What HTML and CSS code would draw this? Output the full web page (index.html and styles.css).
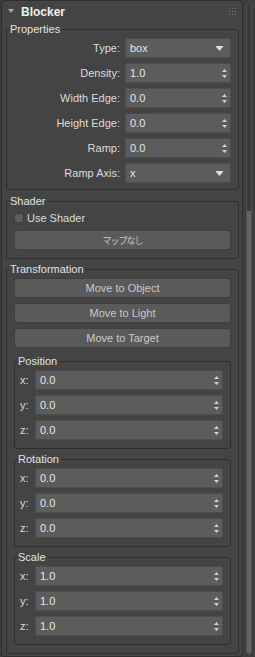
FILE: index.html
```html
<!DOCTYPE html>
<html lang="ja">
<head>
  <meta charset="UTF-8">
  <title>Blocker</title>
  <link rel="stylesheet" href="styles.css">
</head>
<body>
  <div class="wrap">
    <div class="rollout">
      <div class="rollout-head">
        <svg class="caret" width="6" height="4" viewBox="0 0 6 4"><polygon points="0,0 6,0 3,4" fill="#a8a8a8"/></svg>
        <span class="title">Blocker</span>
        <svg class="grip" width="7" height="7" viewBox="0 0 7 7" fill="#7a7a7a">
          <rect x="0" y="0" width="1" height="1"/><rect x="3" y="0" width="1" height="1"/><rect x="6" y="0" width="1" height="1"/>
          <rect x="0" y="3" width="1" height="1"/><rect x="3" y="3" width="1" height="1"/><rect x="6" y="3" width="1" height="1"/>
          <rect x="0" y="6" width="1" height="1"/><rect x="3" y="6" width="1" height="1"/><rect x="6" y="6" width="1" height="1"/>
        </svg>
      </div>

      <fieldset class="group">
        <legend>Properties</legend>
        <div class="props">
          <label>Type:</label>
          <div class="field">box<svg class="drop" width="7" height="5" viewBox="0 0 7 5"><polygon points="0,0 7,0 7,1 3.5,5 0,1" fill="#dcdcdc"/></svg></div>
          <label>Density:</label>
          <div class="field">1.0<svg class="spin" width="5" height="9" viewBox="0 0 5 9"><polygon points="2.5,0 5,3 0,3" /><polygon points="0,6 5,6 2.5,9" /></svg></div>
          <label>Width Edge:</label>
          <div class="field">0.0<svg class="spin" width="5" height="9" viewBox="0 0 5 9"><polygon points="2.5,0 5,3 0,3" /><polygon points="0,6 5,6 2.5,9" /></svg></div>
          <label>Height Edge:</label>
          <div class="field">0.0<svg class="spin" width="5" height="9" viewBox="0 0 5 9"><polygon points="2.5,0 5,3 0,3" /><polygon points="0,6 5,6 2.5,9" /></svg></div>
          <label>Ramp:</label>
          <div class="field">0.0<svg class="spin" width="5" height="9" viewBox="0 0 5 9"><polygon points="2.5,0 5,3 0,3" /><polygon points="0,6 5,6 2.5,9" /></svg></div>
          <label>Ramp Axis:</label>
          <div class="field">x<svg class="drop" width="7" height="5" viewBox="0 0 7 5"><polygon points="0,0 7,0 7,1 3.5,5 0,1" fill="#dcdcdc"/></svg></div>
        </div>
      </fieldset>

      <fieldset class="group shader">
        <legend>Shader</legend>
        <div class="stack">
          <label class="check-row"><input type="checkbox" class="check"> Use Shader</label>
          <button class="btn jp">マップなし</button>
        </div>
      </fieldset>

      <fieldset class="group trans">
        <legend>Transformation</legend>
        <div class="stack">
          <button class="btn">Move to Object</button>
          <button class="btn">Move to Light</button>
          <button class="btn">Move to Target</button>

          <fieldset class="group sub first">
            <legend>Position</legend>
            <div class="xyz">
              <label>x:</label>
              <div class="field">0.0<svg class="spin" width="5" height="9" viewBox="0 0 5 9"><polygon points="2.5,0 5,3 0,3" /><polygon points="0,6 5,6 2.5,9" /></svg></div>
              <label>y:</label>
              <div class="field">0.0<svg class="spin" width="5" height="9" viewBox="0 0 5 9"><polygon points="2.5,0 5,3 0,3" /><polygon points="0,6 5,6 2.5,9" /></svg></div>
              <label>z:</label>
              <div class="field">0.0<svg class="spin" width="5" height="9" viewBox="0 0 5 9"><polygon points="2.5,0 5,3 0,3" /><polygon points="0,6 5,6 2.5,9" /></svg></div>
            </div>
          </fieldset>

          <fieldset class="group sub">
            <legend>Rotation</legend>
            <div class="xyz">
              <label>x:</label>
              <div class="field">0.0<svg class="spin" width="5" height="9" viewBox="0 0 5 9"><polygon points="2.5,0 5,3 0,3" /><polygon points="0,6 5,6 2.5,9" /></svg></div>
              <label>y:</label>
              <div class="field">0.0<svg class="spin" width="5" height="9" viewBox="0 0 5 9"><polygon points="2.5,0 5,3 0,3" /><polygon points="0,6 5,6 2.5,9" /></svg></div>
              <label>z:</label>
              <div class="field">0.0<svg class="spin" width="5" height="9" viewBox="0 0 5 9"><polygon points="2.5,0 5,3 0,3" /><polygon points="0,6 5,6 2.5,9" /></svg></div>
            </div>
          </fieldset>

          <fieldset class="group sub">
            <legend>Scale</legend>
            <div class="xyz">
              <label>x:</label>
              <div class="field">1.0<svg class="spin" width="5" height="9" viewBox="0 0 5 9"><polygon points="2.5,0 5,3 0,3" /><polygon points="0,6 5,6 2.5,9" /></svg></div>
              <label>y:</label>
              <div class="field">1.0<svg class="spin" width="5" height="9" viewBox="0 0 5 9"><polygon points="2.5,0 5,3 0,3" /><polygon points="0,6 5,6 2.5,9" /></svg></div>
              <label>z:</label>
              <div class="field">1.0<svg class="spin" width="5" height="9" viewBox="0 0 5 9"><polygon points="2.5,0 5,3 0,3" /><polygon points="0,6 5,6 2.5,9" /></svg></div>
            </div>
          </fieldset>
        </div>
      </fieldset>
    </div>

    <div class="scrollbar">
      <div class="thumb"></div>
    </div>
  </div>
</body>
</html>
```

FILE: styles.css
```css
body {
  margin: 0;
  background: #3e3e3e;
  font-family: "Liberation Sans", Arial, sans-serif;
  font-size: 11px;
  color: #dcdcdc;
}

.wrap {
  display: flex;
  height: 657px;
  padding-left: 1px;
}

.rollout {
  width: 242px;
  box-sizing: border-box;
  background: #444;
  border: 1px solid #2f2f2f;
  border-radius: 3px;
  padding: 0 3px 5px 4px;
  height: 657px;
}

.rollout-head {
  display: flex;
  align-items: center;
  height: 21px;
}

.caret {
  margin-left: 2px;
  margin-right: 7px;
  margin-top: -1px;
}

.title {
  font-weight: bold;
  font-size: 12px;
  color: #f0f0f0;
}

.grip {
  margin-left: auto;
  margin-right: 3px;
  margin-top: -1px;
}

.group {
  margin: 0;
  padding: 2px 0 6px 0;
  border: 1px solid #2e2e2e;
  border-radius: 3px;
  min-width: 0;
}

.group legend {
  padding: 0 2px 0 1px;
  margin-left: 2px;
  line-height: 14px;
  color: #e2e2e2;
}

.shader {
  margin-top: 4px;
  padding-bottom: 8px;
}

.trans {
  margin-top: 3px;
  padding-bottom: 8px;
}

.props {
  display: grid;
  grid-template-columns: 1fr 106px;
  column-gap: 5px;
  row-gap: 5px;
  padding-right: 7px;
}

.props label {
  text-align: right;
  line-height: 20px;
}

.field {
  display: flex;
  align-items: center;
  height: 20px;
  box-sizing: border-box;
  background: #5c5c5c;
  border: 1px solid #4d4d4d;
  border-radius: 1px;
  padding-left: 4px;
  color: #e6e6e6;
}

.drop {
  margin-left: auto;
  margin-right: 7px;
}

.spin {
  margin-left: auto;
  margin-right: 3px;
  fill: #cfcfcf;
}

.stack {
  display: flex;
  flex-direction: column;
  gap: 5px;
  padding: 0 7px;
}

.check-row {
  display: flex;
  align-items: center;
  height: 16px;
  gap: 3px;
  margin-bottom: -1px;
}

.check {
  appearance: none;
  width: 10px;
  height: 10px;
  margin: 0;
  background: #5c5c5c;
  border: 1px solid #3c3c3c;
}

.btn {
  height: 20px;
  padding: 0;
  background: #5a5a5a;
  border: 1px solid #3f3f3f;
  border-radius: 3px;
  font-family: inherit;
  font-size: 11px;
  color: #c9c9c9;
}

.jp {
  font-family: "Noto Sans CJK JP", sans-serif;
  font-size: 9px;
  letter-spacing: -1px;
}

.sub {
  margin-top: -2px;
  padding-bottom: 8px;
}

.sub.first {
  margin-top: 1px;
}

.xyz {
  display: grid;
  grid-template-columns: 15px 1fr;
  row-gap: 5px;
  padding: 0 7px 0 5px;
}

.xyz label {
  line-height: 20px;
}

.scrollbar {
  width: 6px;
  margin: 2px 0 3px 3px;
  box-sizing: border-box;
  background: #3a3a3a;
  border: 1px solid #505050;
  border-radius: 3px;
  display: flex;
  flex-direction: column;
}

.thumb {
  margin-top: 208px;
  flex: 1;
  background: #636363;
}
```
